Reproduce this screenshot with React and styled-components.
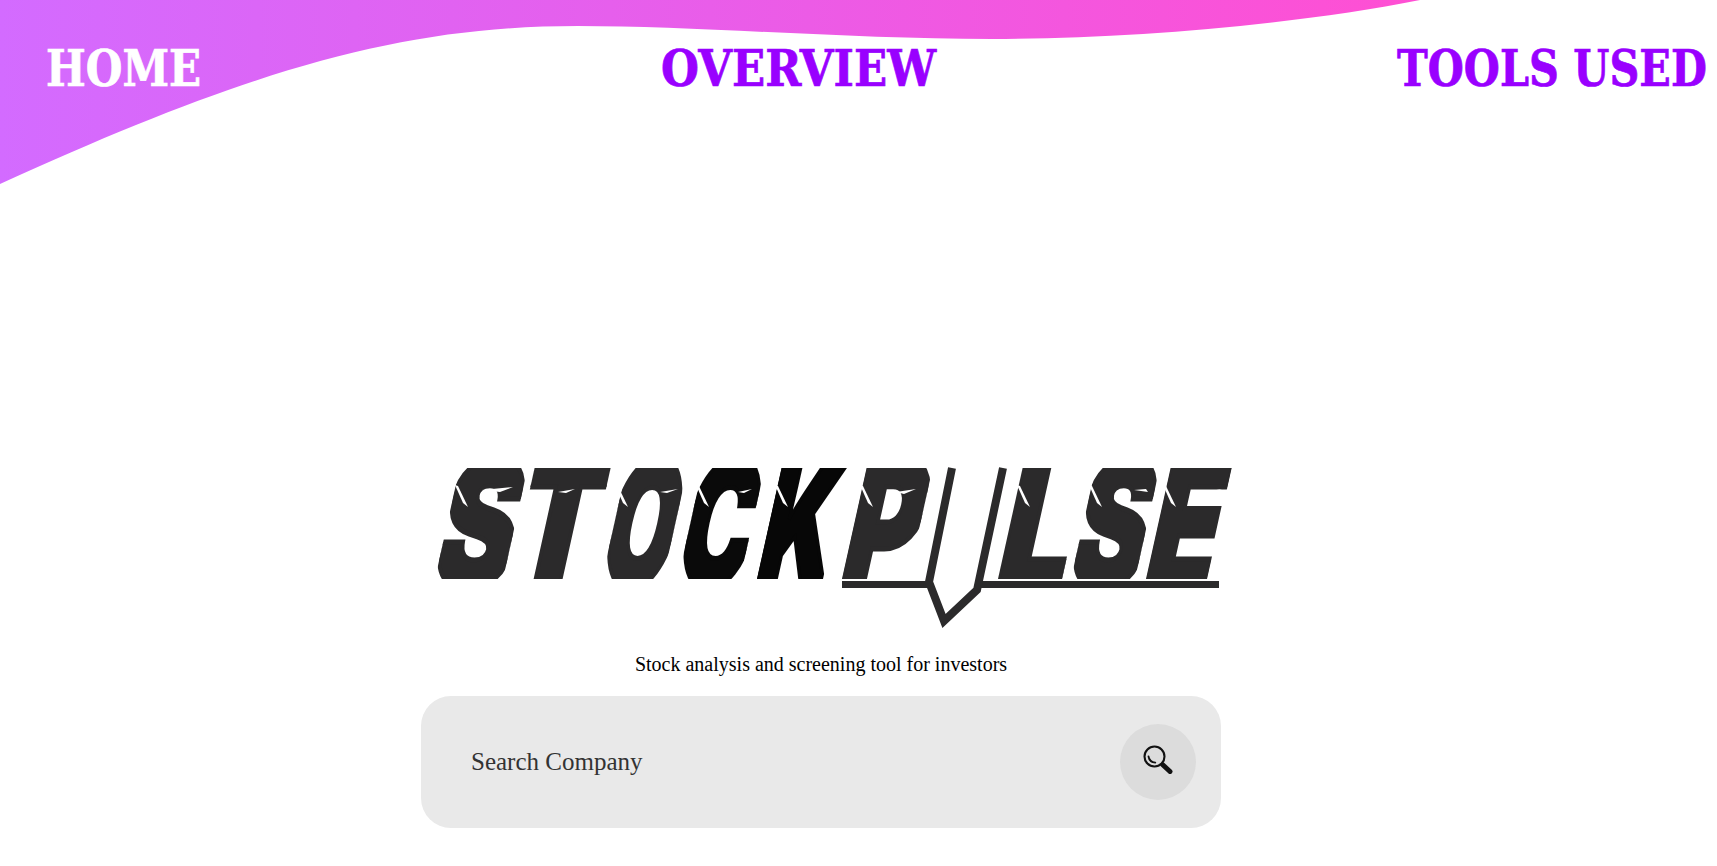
import React from "react";
import styled, { createGlobalStyle } from "styled-components";

const Global = createGlobalStyle`
  html, body { margin: 0; padding: 0; background: #fff; overflow: hidden; }
  body { font-family: "Liberation Serif", "Times New Roman", serif; }
`;

const Page = styled.div`
  position: relative;
  width: 100%;
  height: 866px;
  overflow: hidden;
`;

const Wave = styled.svg`
  position: absolute;
  top: 0;
  left: 0;
  display: block;
`;

const Nav = styled.nav`
  position: relative;
  display: flex;
  justify-content: space-between;
  padding: 38px 10px 0 46px;
`;

const NavLink = styled.a`
  display: block;
  width: ${(p) => p.$width}px;
  font-family: "DejaVu Serif", serif;
  font-weight: 700;
  font-size: 50px;
  line-height: 62px;
  white-space: nowrap;
  color: ${(p) => (p.$active ? "#ffffff" : "#9900ff")};
  -webkit-text-stroke: 0.7px ${(p) => (p.$active ? "#ffffff" : "#9900ff")};
  text-decoration: none;
`;

const NavLabel = styled.span`
  display: inline-block;
  transform: scaleX(${(p) => p.$squeeze});
  transform-origin: left center;
`;

const Main = styled.main`
  display: flex;
  flex-direction: column;
  align-items: center;
  width: 800px;
  margin: 360px 0 0 421px;
`;

const LogoArt = styled.svg`
  display: block;
  width: 800px;
  height: 170px;
  overflow: visible;
`;

const LogoLetter = styled.text`
  font-family: "Inter", "DejaVu Sans", sans-serif;
  font-weight: 900;
  font-size: 176px;
  stroke-width: 5px;
  stroke-linejoin: miter;
`;

const Tagline = styled.p`
  margin: 23px 0 0;
  font-size: 20px;
  line-height: 23px;
  color: #000;
`;

const SearchBar = styled.form`
  display: flex;
  align-items: center;
  box-sizing: border-box;
  width: 800px;
  height: 132px;
  margin-top: 20px;
  padding: 0 25px 0 50px;
  background: #e9e9e9;
  border-radius: 30px;
`;

const SearchInput = styled.input`
  flex: 1;
  min-width: 0;
  padding: 0;
  border: 0;
  outline: 0;
  background: transparent;
  font-family: "Liberation Serif", serif;
  font-size: 25px;
  color: #333;
  &::placeholder { color: #333; opacity: 1; }
`;

const SearchButton = styled.button`
  display: flex;
  align-items: center;
  justify-content: center;
  width: 76px;
  height: 76px;
  padding: 0 0 7px;
  border: 0;
  border-radius: 50%;
  background: #dcdcdc;
`;

const letters = [
  { ch: "S", x: 435, w: 68, fill: "#2b2a2b" },
  { ch: "T", x: 510, w: 76, fill: "#2b2a2b" },
  { ch: "O", x: 602, w: 61, fill: "#2b2a2b" },
  { ch: "C", x: 678, w: 62, fill: "#0a0a0a" },
  { ch: "K", x: 757, w: 66, fill: "#070707" },
  { ch: "P", x: 842, w: 66, fill: "#2b2a2b" },
  { ch: "L", x: 998, w: 64, fill: "#2b2a2b" },
  { ch: "S", x: 1071, w: 64, fill: "#2b2a2b" },
  { ch: "E", x: 1146, w: 61, fill: "#2b2a2b" },
];

const spikes = [456, 616, 697, 776, 861, 1018, 1090, 1164];

const slits = [
  "482,490 513,487 500,492",
  "558,492 575,489 566,493",
  "660,492 678,489 667,493",
  "738,492 752,489 744,493",
  "896,492 916,489 904,494",
  "1148,492 1146,489 1134,490",
  "1205,492 1222,489 1212,493",
];

const Logo = () => (
  <LogoArt viewBox="421 460 800 170" aria-label="StockPulse">
    <defs>
      {letters.map((l, i) => (
        <clipPath id={`cell${i}`} key={i}>
          <rect x="0" y="-111" width={l.w} height="111" />
        </clipPath>
      ))}
    </defs>
    {letters.map((l, i) => (
      <g key={i} transform={`translate(${l.x} 579) skewX(-12.5)`}>
        <g clipPath={`url(#cell${i})`}>
          <LogoLetter
            x={-l.w * 0.08}
            y="8"
            textLength={l.w * 1.16}
            lengthAdjust="spacingAndGlyphs"
            fill={l.fill}
            stroke={l.fill}
          >
            {l.ch}
          </LogoLetter>
        </g>
      </g>
    ))}
    {spikes.map((x) => (
      <polygon key={x} points={`${x - 1},485 ${x + 2},486 ${x + 12},507 ${x + 7},503`} fill="#fff" />
    ))}
    {slits.map((points) => (
      <polygon key={points} points={points} fill="#fff" />
    ))}
    <path d="M842 584.5H930M980 584.5H1219" stroke="#2b2a2b" strokeWidth="7" fill="none" />
    <path
      d="M952 468L929 582L944 621L977 590L1003 468"
      stroke="#2b2a2b"
      strokeWidth="8"
      fill="none"
      strokeLinejoin="miter"
    />
  </LogoArt>
);

const MagnifierIcon = () => (
  <svg width="30" height="30" viewBox="0 0 30 30" fill="none" aria-hidden="true">
    <circle cx="11.5" cy="12.5" r="10" stroke="#111" strokeWidth="2.1" />
    <path d="M5.5 12.5c.6 3.6 3 5.8 6.8 6.2" stroke="#111" strokeWidth="1.8" strokeLinecap="round" />
    <path d="M20 21l7 6.5" stroke="#111" strokeWidth="5" strokeLinecap="round" />
  </svg>
);

export default function App() {
  return (
    <Page>
      <Global />
      <Wave width="1717" height="190" viewBox="0 0 1717 190" aria-hidden="true">
        <defs>
          <linearGradient id="waveFill" x1="0" y1="0" x2="1420" y2="0" gradientUnits="userSpaceOnUse">
            <stop offset="0" stopColor="#d36bff" />
            <stop offset="1" stopColor="#ff4fd3" />
          </linearGradient>
        </defs>
        <path
          d="M0 0H1420C1300 24 1130 39 992 39C850 39 700 26 578 26C400 26 250 70 0 184Z"
          fill="url(#waveFill)"
        />
      </Wave>
      <Nav>
        <NavLink href="#home" $active $width={154}><NavLabel $squeeze={0.842}>HOME</NavLabel></NavLink>
        <NavLink href="#overview" $width={275}><NavLabel $squeeze={0.871}>OVERVIEW</NavLabel></NavLink>
        <NavLink href="#tools" $width={310}><NavLabel $squeeze={0.828}>TOOLS USED</NavLabel></NavLink>
      </Nav>
      <Main>
        <Logo />
        <Tagline>Stock analysis and screening tool for investors</Tagline>
        <SearchBar onSubmit={(e) => e.preventDefault()}>
          <SearchInput placeholder="Search Company" />
          <SearchButton type="submit" aria-label="Search">
            <MagnifierIcon />
          </SearchButton>
        </SearchBar>
      </Main>
    </Page>
  );
}
